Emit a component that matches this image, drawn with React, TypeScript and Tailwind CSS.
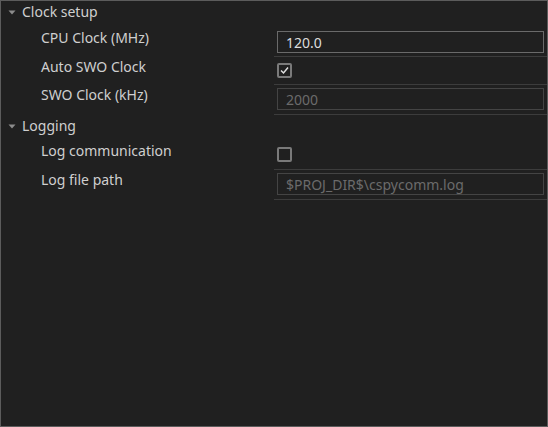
import React from 'react';

type Row = {
  label: string;
  kind: 'text' | 'check';
  value?: string;
  checked?: boolean;
  disabled?: boolean;
  h: string;
};

function Caret() {
  return (
    <svg width="8" height="5" viewBox="0 0 8 5" className="mt-[1px]">
      <path d="M0.5 0.5 L7.5 0.5 L4 4.5 Z" fill="#8c8c8c" />
    </svg>
  );
}

function Section({ title, top }: { title: string; top: string }) {
  return (
    <div className={`flex items-center pl-[7px] ${top}`}>
      <Caret />
      <span className="ml-[6px] leading-4">{title}</span>
    </div>
  );
}

function Check({ checked }: { checked?: boolean }) {
  return (
    <div className="w-[15px] h-[15px] border-2 border-[#7a7a7a] rounded-[2px] flex items-center justify-center">
      {checked && (
        <svg width="11" height="11" viewBox="0 0 11 11">
          <path d="M2 5.5 L4.5 8 L9 2.5" fill="none" stroke="#e0e0e0" strokeWidth="1.5" />
        </svg>
      )}
    </div>
  );
}

function PropRow({ row }: { row: Row }) {
  return (
    <div className={`flex ${row.h}`}>
      <div className="w-[273px] shrink-0 pl-[40px] pt-[2px] leading-4">{row.label}</div>
      <div className="flex-1 border-b border-[#3c3c3c] pl-[3px] pr-[3px]">
        {row.kind === 'text' ? (
          <div
            className={`mt-[3px] h-[22px] border flex items-center pl-[8px] ${
              row.disabled ? 'border-[#444444] text-[#6b6b6b]' : 'border-[#6a6a6a] text-[#dcdcdc]'
            }`}
          >
            {row.value}
          </div>
        ) : (
          <div className="mt-[6px]">
            <Check checked={row.checked} />
          </div>
        )}
      </div>
    </div>
  );
}

const clockRows: Row[] = [
  { label: 'CPU Clock (MHz)', kind: 'text', value: '120.0', h: 'h-[29px]' },
  { label: 'Auto SWO Clock', kind: 'check', checked: true, h: 'h-[28px]' },
  { label: 'SWO Clock (kHz)', kind: 'text', value: '2000', disabled: true, h: 'h-[30px]' },
];

const logRows: Row[] = [
  { label: 'Log communication', kind: 'check', checked: false, h: 'h-[29px]' },
  { label: 'Log file path', kind: 'text', value: '$PROJ_DIR$\\cspycomm.log', disabled: true, h: 'h-[30px]' },
];

export default function App() {
  return (
    <div
      className="w-[548px] h-[427px] bg-[#202020] border border-[#5c5c5c] text-[#cfcfcf] text-[14px] overflow-hidden"
      style={{ fontFamily: '"Noto Sans", "DejaVu Sans", sans-serif' }}
    >
      <div className="h-[27px] pt-[3px]">
        <Section title="Clock setup" top="" />
      </div>
      {clockRows.map((r) => (
        <PropRow key={r.label} row={r} />
      ))}
      <div className="h-[26px] pt-[3px]">
        <Section title="Logging" top="" />
      </div>
      {logRows.map((r) => (
        <PropRow key={r.label} row={r} />
      ))}
    </div>
  );
}
